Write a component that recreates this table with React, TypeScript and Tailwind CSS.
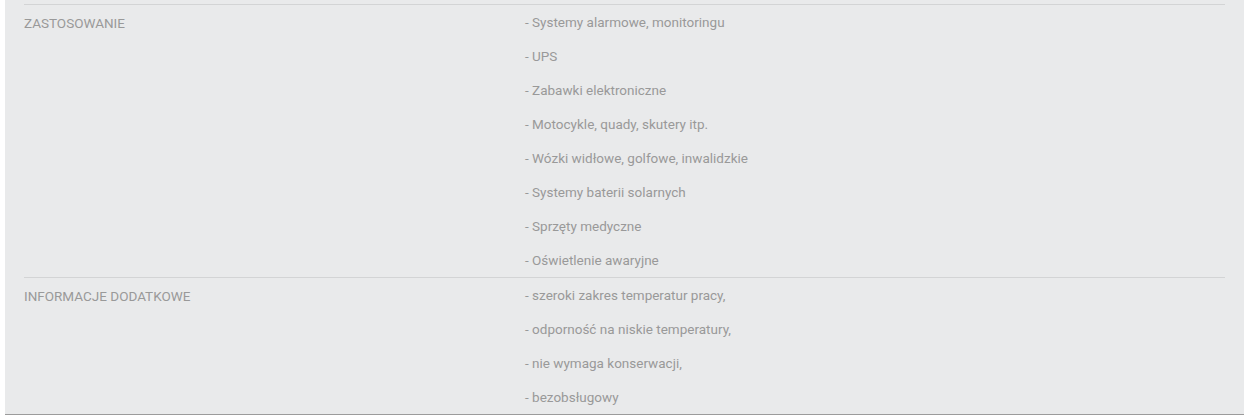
import React from 'react';

// Spec table rows: label on the left, list of values on the right
const rows: { label: string; items: string[] }[] = [
  {
    label: 'ZASTOSOWANIE',
    items: [
      '- Systemy alarmowe, monitoringu',
      '- UPS',
      '- Zabawki elektroniczne',
      '- Motocykle, quady, skutery itp.',
      '- Wózki widłowe, golfowe, inwalidzkie',
      '- Systemy baterii solarnych',
      '- Sprzęty medyczne',
      '- Oświetlenie awaryjne',
    ],
  },
  {
    label: 'INFORMACJE DODATKOWE',
    items: [
      '- szeroki zakres temperatur pracy,',
      '- odporność na niskie temperatury,',
      '- nie wymaga konserwacji,',
      '- bezobsługowy',
    ],
  },
];

export default function App() {
  return (
    <div className="h-[415px] overflow-hidden bg-white pl-[5px] pr-[4px]">
      <div
        className="h-full bg-[#e9eaeb] pt-1 text-[13.5px] text-[#999999]"
        style={{ fontFamily: 'Roboto, "Open Sans", sans-serif' }}
      >
        <div className="mx-[19px]">
          {rows.map((row) => (
            <div key={row.label} className="flex border-t border-[#d3d4d5]">
              <div className="w-[501px] shrink-0 pt-px leading-[34px]">{row.label}</div>
              <ul>
                {row.items.map((item) => (
                  <li key={item} className="h-[34px] pt-px leading-[33px]">
                    {item}
                  </li>
                ))}
              </ul>
            </div>
          ))}
        </div>
        <div className="h-[2px] bg-[#9b9b9b]" />
      </div>
    </div>
  );
}
